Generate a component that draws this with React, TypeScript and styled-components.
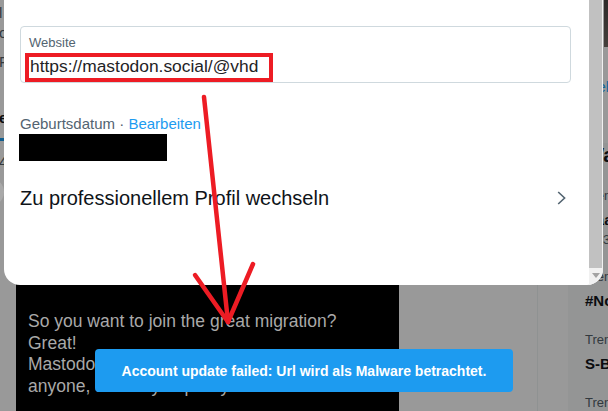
import React from "react";
import styled, { createGlobalStyle } from "styled-components";

const GlobalStyle = createGlobalStyle`
  html, body { margin: 0; padding: 0; }
  body {
    background: #999999;
    font-family: "Liberation Sans", Arial, sans-serif;
    overflow: hidden;
  }
`;

const Page = styled.div`
  position: relative;
  width: 608px;
  height: 411px;
  overflow: hidden;
  background: #999999;
  display: flex;
`;

/* ---------- background: main column ---------- */

const MainColumn = styled.main`
  width: 537px;
  flex: none;
  border-right: 1px solid #8f9292;
  display: flex;
  flex-direction: column;
`;

const ProfileArea = styled.section`
  height: 250px;
  flex: none;
  display: flex;
  flex-direction: column;
  align-items: flex-start;
  overflow: hidden;
`;

const Fragment = styled.span<{ $mt: number; $bold?: boolean; $color?: string }>`
  margin-top: ${(p) => p.$mt}px;
  font-size: 15px;
  line-height: 20px;
  font-weight: ${(p) => (p.$bold ? 700 : 400)};
  color: ${(p) => p.$color ?? "#333a3f"};
  margin-left: -1px;
`;

const TabIndicator = styled.div`
  margin-top: 10px;
  width: 30px;
  height: 3px;
  background: #115e8f;
`;

const AvatarEdge = styled.div`
  margin-top: 6px;
  margin-left: -24px;
  width: 28px;
  height: 28px;
  border-radius: 50%;
  background: #a9a9a9;
`;

const TweetImage = styled.div`
  margin-left: 16px;
  width: 383px;
  flex: 1;
  background: #000;
  padding: 15px 0 0 12px;
  box-sizing: border-box;
  color: #a9a9a9;
  font-size: 17.5px;
  line-height: 21.5px;
  white-space: nowrap;
  overflow: hidden;
`;

const TweetLine = styled.div<{ $gapBelow?: number }>`
  min-height: 21.5px;
  margin-bottom: ${(p) => p.$gapBelow ?? 0}px;
`;

/* ---------- background: sidebar ---------- */

const Sidebar = styled.aside`
  flex: 1;
  padding-left: 30px;
  display: flex;
  flex-direction: column;
  overflow: hidden;
`;

const SideInner = styled.div`
  width: 350px;
  display: flex;
  flex-direction: column;
`;

const MediaThumb = styled.div`
  margin-left: 36px;
  width: 60px;
  height: 47px;
  background: linear-gradient(180deg, #2d2a29, #45403c);
`;

const SideLink = styled.span`
  margin-top: 30px;
  padding-left: 17px;
  font-size: 15px;
  line-height: 20px;
  color: #13679b;
  white-space: nowrap;
`;

const TrendBox = styled.div`
  margin-top: 46px;
  background: #949595;
  border-radius: 16px 0 0 0;
  display: flex;
  flex-direction: column;
`;

const TrendHeader = styled.h2`
  margin: 0;
  padding: 0 17px;
  font-size: 20px;
  line-height: 24px;
  font-weight: 700;
  color: #0a0c0f;
  white-space: nowrap;
`;

const TrendItem = styled.div<{ $first?: boolean }>`
  padding: ${(p) => (p.$first ? 21 : 12)}px 17px 9px;
  display: flex;
  flex-direction: column;
  white-space: nowrap;
`;

const TrendCategory = styled.span`
  font-size: 13px;
  line-height: 16px;
  color: #32393e;
`;

const TrendTitle = styled.span`
  margin-top: 6px;
  font-size: 15px;
  line-height: 20px;
  font-weight: 700;
  color: #0a0c0f;
`;

const TrendCount = styled.span`
  margin-top: 2px;
  font-size: 13px;
  line-height: 16px;
  color: #32393e;
`;

/* ---------- modal ---------- */

const Modal = styled.div`
  position: absolute;
  top: 0;
  left: 4px;
  width: 599px;
  height: 285px;
  background: #ffffff;
  border-radius: 0 0 16px 16px;
  overflow: hidden;
  display: flex;
`;

const ModalBody = styled.div`
  flex: 1;
  padding: 26px 18px 0 16px;
  display: flex;
  flex-direction: column;
  align-items: stretch;
`;

const Field = styled.div`
  position: relative;
  height: 57px;
  box-sizing: border-box;
  border: 1px solid #cfd9de;
  border-radius: 4px;
  padding: 8px 8px 0;
  display: flex;
  flex-direction: column;
`;

const FieldLabel = styled.span`
  font-size: 13px;
  line-height: 16px;
  color: #536471;
`;

const FieldValue = styled.span`
  margin-top: 3px;
  margin-left: 1px;
  font-size: 17.4px;
  line-height: 24px;
  color: #1f2326;
`;

const Highlight = styled.div`
  position: absolute;
  left: 4px;
  top: 26px;
  width: 248px;
  height: 29px;
  box-sizing: border-box;
  border: 4px solid #ed1c24;
`;

const BirthRow = styled.div`
  margin-top: 31px;
  font-size: 15px;
  line-height: 20px;
  color: #536471;
`;

const EditLink = styled.span`
  color: #1d9bf0;
`;

const Redacted = styled.div`
  margin-left: -1px;
  width: 148px;
  height: 27px;
  background: #000;
`;

const ProRow = styled.div`
  margin-top: 25px;
  height: 24px;
  display: flex;
  align-items: center;
  justify-content: space-between;
  font-size: 20px;
  line-height: 24px;
  color: #0f1419;
`;

const Chevron = styled.svg`
  margin-right: 5px;
  flex: none;
`;

const Scrollbar = styled.div`
  width: 14px;
  flex: none;
  display: flex;
  flex-direction: column;
  background: #f1f1f1;
`;

const ScrollThumb = styled.div`
  flex: 1;
  margin-right: 1px;
  background: #c1c1c1;
`;

const ScrollArrow = styled.div`
  height: 17px;
  display: flex;
  align-items: flex-start;
  justify-content: center;
  padding-top: 5px;
  box-sizing: border-box;
`;

/* ---------- toast & annotation ---------- */

const Toast = styled.div`
  position: absolute;
  left: 95px;
  top: 349px;
  width: 418px;
  height: 43px;
  border-radius: 4px;
  background: #1d9bf0;
  color: #ffffff;
  font-size: 14px;
  font-weight: 700;
  display: flex;
  align-items: center;
  justify-content: center;
`;

const Annotation = styled.svg`
  position: absolute;
  left: 0;
  top: 0;
  pointer-events: none;
`;

export default function App() {
  return (
    <>
      <GlobalStyle />
      <Page>
        <MainColumn>
          <ProfileArea>
            <Fragment $mt={3}>l</Fragment>
            <Fragment $mt={0}>o</Fragment>
            <Fragment $mt={9}>F</Fragment>
            <Fragment $mt={36} $bold $color="#0a0c0f">
              e
            </Fragment>
            <TabIndicator />
            <Fragment $mt={11}>4</Fragment>
            <AvatarEdge />
          </ProfileArea>
          <TweetImage>
            <TweetLine $gapBelow={3}>A quick guide to joining Mastodon, step by step:</TweetLine>
            <TweetLine />
            <TweetLine>So you want to join the great migration?</TweetLine>
            <TweetLine>Great!</TweetLine>
            <TweetLine>Mastodon is a network of servers run by</TweetLine>
            <TweetLine>anyone, so first you pick your server.</TweetLine>
          </TweetImage>
        </MainColumn>
        <Sidebar>
          <SideInner>
            <MediaThumb />
            <SideLink>Mehr anzeigen</SideLink>
            <TrendBox>
              <TrendHeader>Was gerade passiert</TrendHeader>
              <TrendItem $first>
                <TrendCategory>Trending in Deutschland</TrendCategory>
                <TrendTitle>Haarspray</TrendTitle>
                <TrendCount>7.430 Tweets</TrendCount>
              </TrendItem>
              <TrendItem>
                <TrendCategory>Trending in Deutschland</TrendCategory>
                <TrendTitle>#NoAfD</TrendTitle>
              </TrendItem>
              <TrendItem>
                <TrendCategory>Trending in Deutschland</TrendCategory>
                <TrendTitle>S-Bahn</TrendTitle>
              </TrendItem>
              <TrendItem>
                <TrendCategory>Trending in Deutschland</TrendCategory>
                <TrendTitle>Bundestag</TrendTitle>
              </TrendItem>
            </TrendBox>
          </SideInner>
        </Sidebar>

        <Modal>
          <ModalBody>
            <Field>
              <FieldLabel>Website</FieldLabel>
              <FieldValue>https://mastodon.social/@vhd</FieldValue>
              <Highlight />
            </Field>
            <BirthRow>
              Geburtsdatum · <EditLink>Bearbeiten</EditLink>
            </BirthRow>
            <Redacted />
            <ProRow>
              <span>Zu professionellem Profil wechseln</span>
              <Chevron width="9" height="14" viewBox="0 0 9 14">
                <polyline
                  points="1.2,1 7.6,7 1.2,13"
                  fill="none"
                  stroke="#536471"
                  strokeWidth="1.6"
                />
              </Chevron>
            </ProRow>
          </ModalBody>
          <Scrollbar>
            <ScrollThumb />
            <ScrollArrow>
              <svg width="8" height="5" viewBox="0 0 8 5">
                <polygon points="0,0 8,0 4,5" fill="#a3a3a3" />
              </svg>
            </ScrollArrow>
          </Scrollbar>
        </Modal>

        <Toast>Account update failed: Url wird als Malware betrachtet.</Toast>

        <Annotation width="608" height="411" viewBox="0 0 608 411">
          <g stroke="#ed1c24" strokeWidth="4.5" strokeLinecap="round" fill="none">
            <line x1="204" y1="97" x2="228" y2="322" />
            <line x1="195" y1="275" x2="228" y2="322" />
            <line x1="253" y1="264" x2="228" y2="322" />
          </g>
        </Annotation>
      </Page>
    </>
  );
}
